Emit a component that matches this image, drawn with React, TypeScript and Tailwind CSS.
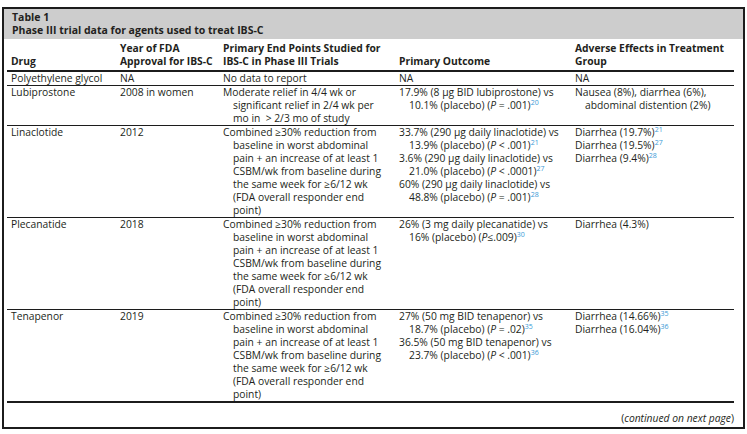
import React from "react";

type Line = React.ReactNode;

const Sup = ({ n }: { n: string }) => (
	<span className="relative -top-[4px] text-[7px] leading-[0] text-[#3a9ad6]">{n}</span>
);

const P = () => <i>P</i>;

const ge = "≥";

const endPoints: Line[] = [
	<>Combined {ge}30% reduction from</>,
	"baseline in worst abdominal",
	"pain + an increase of at least 1",
	"CSBM/wk from baseline during",
	<>the same week for {ge}6/12 wk</>,
	"(FDA overall responder end",
	"point)",
];

// each paragraph: first line flush, the rest hang 10px
function Para({ lines }: { lines: Line[] }) {
	return (
		<div>
			{lines.map((l, i) => (
				<div key={i} className={i ? "pl-[10px]" : ""}>
					{l}
				</div>
			))}
		</div>
	);
}

type Row = {
	drug: string;
	year: string;
	ends: Line[][];
	outcome: Line[][];
	adverse: Line[][];
};

const rows: Row[] = [
	{
		drug: "Polyethylene glycol",
		year: "NA",
		ends: [["No data to report"]],
		outcome: [["NA"]],
		adverse: [["NA"]],
	},
	{
		drug: "Lubiprostone",
		year: "2008 in women",
		ends: [["Moderate relief in 4/4 wk or", "significant relief in 2/4 wk per", <>mo in &nbsp;&gt; 2/3 mo of study</>]],
		outcome: [
			[
				"17.9% (8 µg BID lubiprostone) vs",
				<>
					10.1% (placebo) (<P /> = .001)<Sup n="20" />
				</>,
			],
		],
		adverse: [["Nausea (8%), diarrhea (6%),", "abdominal distention (2%)"]],
	},
	{
		drug: "Linaclotide",
		year: "2012",
		ends: [endPoints],
		outcome: [
			[
				"33.7% (290 µg daily linaclotide) vs",
				<>
					13.9% (placebo) (<P /> &lt; .001)<Sup n="21" />
				</>,
			],
			[
				"3.6% (290 µg daily linaclotide) vs",
				<>
					21.0% (placebo) (<P /> &lt; .0001)<Sup n="27" />
				</>,
			],
			[
				"60% (290 µg daily linaclotide) vs",
				<>
					48.8% (placebo) (<P /> = .001)<Sup n="28" />
				</>,
			],
		],
		adverse: [
			[
				<>
					Diarrhea (19.7%)<Sup n="21" />
				</>,
			],
			[
				<>
					Diarrhea (19.5%)<Sup n="27" />
				</>,
			],
			[
				<>
					Diarrhea (9.4%)<Sup n="28" />
				</>,
			],
		],
	},
	{
		drug: "Plecanatide",
		year: "2018",
		ends: [endPoints],
		outcome: [
			[
				"26% (3 mg daily plecanatide) vs",
				<>
					16% (placebo) (<P />≤.009)<Sup n="30" />
				</>,
			],
		],
		adverse: [["Diarrhea (4.3%)"]],
	},
	{
		drug: "Tenapenor",
		year: "2019",
		ends: [endPoints],
		outcome: [
			[
				"27% (50 mg BID tenapenor) vs",
				<>
					18.7% (placebo) (<P /> = .02)<Sup n="35" />
				</>,
			],
			[
				"36.5% (50 mg BID tenapenor) vs",
				<>
					23.7% (placebo) (<P /> &lt; .001)<Sup n="36" />
				</>,
			],
		],
		adverse: [
			[
				<>
					Diarrhea (14.66%)<Sup n="35" />
				</>,
			],
			[
				<>
					Diarrhea (16.04%)<Sup n="36" />
				</>,
			],
		],
	},
];

const cell = "align-top pl-[4px] pr-0 py-0";
const head = "align-bottom text-left font-bold pl-[4px] pt-[3px] pb-[2px]";

export default function App() {
	return (
		<div
			className="w-[747px] h-[434px] bg-white pt-[7px] pl-[2px] text-[#231f20] overflow-hidden"
			style={{ fontFamily: '"Open Sans", "Noto Sans", sans-serif' }}
		>
			<div className="w-[743px] h-[422px] border-2 border-[#1c1c1c] flex flex-col">
				<div className="h-[30px] bg-[#cdcdcd] pl-[8px] pt-[2px] text-[10.5px] leading-[13px] font-bold">
					<div>Table 1</div>
					<div>Phase III trial data for agents used to treat IBS-C</div>
				</div>

				<div className="pl-[3px]">
					<table className="w-[727px] table-fixed border-collapse text-[10.3px] leading-[13px] whitespace-nowrap">
						<colgroup>
							<col className="w-[109px]" />
							<col className="w-[103px]" />
							<col className="w-[176px]" />
							<col className="w-[176px]" />
							<col className="w-[163px]" />
						</colgroup>
						<thead>
							<tr className="border-b-2 border-[#1c1c1c]">
								<th className={head}>Drug</th>
								<th className={head}>
									Year of FDA
									<br />
									Approval for IBS-C
								</th>
								<th className={head}>
									Primary End Points Studied for
									<br />
									IBS-C in Phase III Trials
								</th>
								<th className={head}>Primary Outcome</th>
								<th className={head}>
									Adverse Effects in Treatment
									<br />
									Group
								</th>
							</tr>
						</thead>
						<tbody>
							{rows.map((r, i) => (
								<tr
									key={r.drug}
									className={i === rows.length - 1 ? "border-b-2 border-[#1c1c1c]" : "border-b border-[#1c1c1c]"}
								>
									<td className={cell}>{r.drug}</td>
									<td className={cell}>{r.year}</td>
									<td className={cell}>
										{r.ends.map((p, k) => (
											<Para key={k} lines={p} />
										))}
									</td>
									<td className={cell}>
										{r.outcome.map((p, k) => (
											<Para key={k} lines={p} />
										))}
									</td>
									<td className={cell}>
										{r.adverse.map((p, k) => (
											<Para key={k} lines={p} />
										))}
									</td>
								</tr>
							))}
						</tbody>
					</table>
				</div>

				<div className="w-[730px] text-right text-[10.3px] leading-[13px] pt-[9px]">
					(<i>continued on next page</i>)
				</div>
			</div>
		</div>
	);
}
